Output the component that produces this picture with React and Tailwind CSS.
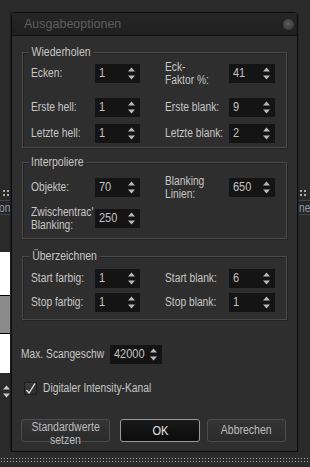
import React from "react";

const SANS = "font-['Liberation_Sans',Arial,sans-serif]";

function T({ children, c = "" }) {
  return (
    <span className={`inline-block whitespace-pre origin-left scale-x-[0.82] ${c}`}>{children}</span>
  );
}

function Arrows({ color = "#b8b8b8" }) {
  return (
    <svg width="7" height="13" viewBox="0 0 7 13" className="shrink-0">
      <path d="M3.5 0.5 L7 4.5 H0 Z" fill={color} />
      <path d="M0 8.5 H7 L3.5 12.5 Z" fill={color} />
    </svg>
  );
}

function Spin({ v, w = "w-[45px]" }) {
  return (
    <div className={`${w} h-[19px] shrink-0 bg-[#141414] flex items-center justify-between pl-[4px] pr-[5px] text-[#c2c2c2] text-[12.5px] leading-none overflow-hidden`}>
      <span className="inline-block origin-left scale-x-[0.88]">{v}</span>
      <Arrows />
    </div>
  );
}

function Label({ children, w = "w-[64px]" }) {
  return (
    <div className={`${w} shrink-0 text-[12.5px] leading-[13px] text-[#c6c6c6] whitespace-nowrap`}>
      <T>{children}</T>
    </div>
  );
}

function Row({ l1, v1, l2, v2, mt = "" }) {
  return (
    <div className={`flex items-center h-[19px] ${mt}`}>
      <Label>{l1}</Label>
      <Spin v={v1} />
      <div className="w-[25px] shrink-0" />
      {l2 ? <Label>{l2}</Label> : null}
      {l2 ? <Spin v={v2} w="w-[46px]" /> : null}
    </div>
  );
}

function Group({ title, h, mt, pt, children }) {
  return (
    <div className={`relative ml-[10px] w-[265px] ${h} ${mt} ${pt} pl-[8px] border border-[#4a4a4a] shadow-[inset_1px_1px_0_#222,1px_1px_0_#222]`}>
      <div className="absolute left-[6px] -top-[8px] px-[2px] bg-[#2e2e2e] text-[12.5px] leading-[14px] text-[#c6c6c6] overflow-hidden">
        <span className="inline-block whitespace-pre scale-x-[0.84] -mx-[5px]">{title}</span>
      </div>
      {children}
    </div>
  );
}

function Dots({ n, cls }) {
  return (
    <div className={`flex gap-[2px] ${cls}`}>
      {Array.from({ length: n }).map((_, i) => (
        <div key={i} className="w-[1px] h-[1px] bg-[#b5b5b5] shrink-0" />
      ))}
    </div>
  );
}

function Grip() {
  return (
    <div className="flex flex-col gap-[2px] pt-[1px]">
      <div className="flex gap-[2px]">
        <div className="w-[2px] h-[2px] bg-[#aaa]" />
        <div className="w-[2px] h-[2px] bg-[#aaa]" />
      </div>
      <div className="flex gap-[2px]">
        <div className="w-[2px] h-[2px] bg-[#aaa]" />
        <div className="w-[2px] h-[2px] bg-[#aaa]" />
      </div>
    </div>
  );
}

export default function App() {
  return (
    <div className={`w-[310px] h-[467px] bg-[#2a2a2a] flex flex-col overflow-hidden ${SANS}`}>
      <div className="h-[12px] shrink-0" />
      <div className="flex h-[440px] shrink-0">
        {/* left strip (background app) */}
        <div className="w-[11px] shrink-0 flex flex-col border-r border-[#1c1c1c]">
          <div className="h-[177px] shrink-0" />
          <div className="h-[8px] shrink-0 pl-[3px]">
            <Grip />
          </div>
          <div className="h-[3px] shrink-0" />
          <div className="h-[15px] shrink-0 border-y border-[#444] bg-[#262626] overflow-hidden flex items-center justify-end text-[12px] leading-none text-[#8e9bb4]">
            <span className="inline-block scale-x-[0.85] origin-right">on</span>
          </div>
          <div className="h-[37px] shrink-0" />
          <div className="h-[43px] shrink-0 bg-white" />
          <div className="h-[39px] shrink-0 bg-[#8b8b8b] border-y border-black" />
          <div className="h-[39px] shrink-0 bg-white" />
          <div className="h-[10px] shrink-0" />
          <div className="h-[17px] shrink-0 pl-[3px] flex items-center">
            <Arrows color="#c8c8c8" />
          </div>
          <div className="flex-1" />
        </div>

        {/* dialog */}
        <div className="w-[287px] shrink-0 h-[440px] flex flex-col border border-[#0d0d0d] rounded-t-[4px] bg-[#2e2e2e] overflow-hidden">
          <div className="h-[23px] shrink-0 flex items-center justify-between pl-[12px] pr-[3px] bg-[linear-gradient(#262626,#1f1f1f)] border-b border-[#121212]">
            <span className="text-[12.5px] text-[#5e5e5e] leading-none pt-[1px]">
              Ausgabeoptionen
            </span>
            <div className="w-[11px] h-[11px] rounded-full bg-[radial-gradient(circle_at_45%_40%,#5c5c5c,#2c2c2c)]" />
          </div>

          <div className="flex flex-col flex-1">
            <Group title="Wiederholen" h="h-[96px]" mt="mt-[16px]" pt="pt-[11px]">
              <Row l1="Ecken:" v1="1" l2={"Eck-\nFaktor %:"} v2="41" />
              <Row l1="Erste hell:" v1="1" l2="Erste blank:" v2="9" mt="mt-[15px]" />
              <Row l1="Letzte hell:" v1="1" l2="Letzte blank:" v2="2" mt="mt-[7px]" />
            </Group>

            <Group title="Interpoliere" h="h-[77px]" mt="mt-[14px]" pt="pt-[15px]">
              <Row l1="Objekte:" v1="70" l2={"Blanking\nLinien:"} v2="650" />
              <div className="flex items-center h-[19px] mt-[12px]">
                <Label w="w-[62px]">{"Zwischentrac'\nBlanking:"}</Label>
                <div className="w-[2px] shrink-0" />
                <Spin v="250" />
              </div>
            </Group>

            <Group title="Überzeichnen" h="h-[64px]" mt="mt-[17px]" pt="pt-[12px]">
              <Row l1="Start farbig:" v1="1" l2="Start blank:" v2="6" />
              <Row l1="Stop farbig:" v1="1" l2="Stop blank:" v2="1" mt="mt-[5px]" />
            </Group>

            <div className="flex items-center h-[19px] mt-[25px] ml-[9px]">
              <Label w="w-[89px]">Max. Scangeschw</Label>
              <Spin v="42000" w="w-[52px]" />
            </div>

            <div className="flex items-center h-[13px] mt-[18px] ml-[12px] gap-[6px]">
              <div className="w-[13px] h-[13px] shrink-0 bg-[linear-gradient(#3c3c3c,#2c2c2c)] border border-[#1e1e1e] flex items-center justify-center">
                <svg width="11" height="11" viewBox="0 0 11 11">
                  <path d="M1.5 7 L4 10 L10 0.5" stroke="#e0e0e0" strokeWidth="1.4" fill="none" />
                </svg>
              </div>
              <span className="text-[12.5px] leading-none text-[#c6c6c6]">
                <T>Digitaler Intensity-Kanal</T>
              </span>
            </div>

            <div className="flex mt-[24px] ml-[9px] h-[23px]">
              <div className="w-[89px] h-[23px] rounded-[3px] border border-[#4c4c4c] bg-[linear-gradient(#353535,#2a2a2a)] flex flex-col items-center pt-[1px] text-[12.5px] leading-[13px] text-[#bdbdbd] overflow-visible">
                <span className="inline-block scale-x-[0.84]">Standardwerte</span>
                <span className="inline-block scale-x-[0.84]">setzen</span>
              </div>
              <div className="w-[80px] h-[23px] ml-[10px] rounded-[3px] border border-[#9a9a9a] bg-[linear-gradient(#1a1a1a,#0c0c0c)] flex items-center justify-center text-[13px] leading-none text-[#e8e8e8]">
                <span className="inline-block scale-x-[0.85]">OK</span>
              </div>
              <div className="w-[79px] h-[23px] ml-[7px] rounded-[3px] border border-[#4c4c4c] bg-[linear-gradient(#353535,#2a2a2a)] flex items-center justify-center text-[12.5px] leading-none text-[#bdbdbd]">
                <span className="inline-block scale-x-[0.84]">Abbrechen</span>
              </div>
            </div>
          </div>
        </div>

        {/* right strip */}
        <div className="w-[12px] shrink-0 flex flex-col border-l border-[#232323]">
          <div className="h-[177px] shrink-0" />
          <div className="h-[8px] shrink-0 pl-[1px]">
            <Grip />
          </div>
          <div className="h-[3px] shrink-0" />
          <div className="h-[15px] shrink-0 border-y border-[#444] bg-[#262626] overflow-hidden flex items-center text-[12px] leading-none text-[#8e9bb4]">
            <span className="inline-block scale-x-[0.85] origin-left">ne</span>
          </div>
          <div className="flex-1" />
        </div>
      </div>
      <div className="h-[15px] shrink-0 flex flex-col pt-[6px] gap-[2px] overflow-hidden">
        <Dots n={104} cls="ml-[1px]" />
        <Dots n={104} cls="ml-[1px]" />
      </div>
    </div>
  );
}
